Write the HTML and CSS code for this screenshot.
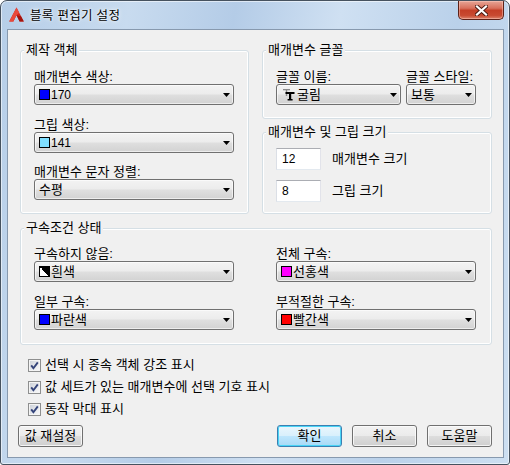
FILE: index.html
```html
<!DOCTYPE html>
<html lang="ko">
<head>
<meta charset="utf-8">
<title>블록 편집기 설정</title>
<link rel="stylesheet" href="styles.css">
</head>
<body>
<div class="window">
  <div class="titlebar">
    <svg class="app-icon" width="15" height="15" viewBox="0 0 15 15">
      <path d="M7.5 0.5 L14.8 14.5 H10.6 L7.5 8.2 L4.4 14.5 H0.2 Z" fill="#d3261c"/>
      <path d="M7.5 0.5 L10.2 5.8 L7.5 8.2 L4.4 14.5 H0.2 Z" fill="#e8493c"/>
      <path d="M7.5 8.2 L10.6 14.5 H14.8 L12 9.2 Z" fill="#a3140e"/>
    </svg>
    <span class="title">블록 편집기 설정</span>
    <div class="close">
      <svg width="13" height="11" viewBox="0 0 13 11">
        <path d="M2 1.5 L11 9.5 M11 1.5 L2 9.5" stroke="#4a1a12" stroke-width="4" stroke-linecap="square"/>
        <path d="M2 1.5 L11 9.5 M11 1.5 L2 9.5" stroke="#ffffff" stroke-width="2.2" stroke-linecap="square"/>
      </svg>
    </div>
  </div>
  <div class="client">
    <div class="top">
      <section class="group g-object">
        <div class="legend">제작 객체</div>
        <div class="field">
          <div class="lbl">매개변수 색상:</div>
          <div class="combo"><span class="sw sw-blue"></span><span class="val num">170</span><svg class="arrow" width="7" height="4" viewBox="0 0 7 4"><path d="M0 0H7L3.5 4Z"/></svg></div>
        </div>
        <div class="field">
          <div class="lbl">그립 색상:</div>
          <div class="combo"><span class="sw sw-cyan"></span><span class="val num">141</span><svg class="arrow" width="7" height="4" viewBox="0 0 7 4"><path d="M0 0H7L3.5 4Z"/></svg></div>
        </div>
        <div class="field field-last">
          <div class="lbl">매개변수 문자 정렬:</div>
          <div class="combo"><span class="val">수평</span><svg class="arrow" width="7" height="4" viewBox="0 0 7 4"><path d="M0 0H7L3.5 4Z"/></svg></div>
        </div>
      </section>
      <div class="rightcol">
        <section class="group g-font">
          <div class="legend">매개변수 글꼴</div>
          <div class="font-row">
            <div class="f-name">
              <div class="lbl">글꼴 이름:</div>
              <div class="combo combo-font">
                <svg class="tt" width="12" height="12" viewBox="0 0 12 12">
                  <rect x="0" y="0" width="7" height="1.3" fill="#8a8a8a"/>
                  <rect x="2.8" y="0" width="1.4" height="7" fill="#8a8a8a"/>
                  <rect x="2.5" y="3" width="9" height="2" fill="#000"/>
                  <rect x="6" y="3" width="2.2" height="8" fill="#000"/>
                  <rect x="4.6" y="10" width="5" height="1.5" fill="#000"/>
                </svg>
                <span class="val">굴림</span><svg class="arrow" width="7" height="4" viewBox="0 0 7 4"><path d="M0 0H7L3.5 4Z"/></svg>
              </div>
            </div>
            <div class="f-style">
              <div class="lbl">글꼴 스타일:</div>
              <div class="combo"><span class="val">보통</span><svg class="arrow" width="7" height="4" viewBox="0 0 7 4"><path d="M0 0H7L3.5 4Z"/></svg></div>
            </div>
          </div>
        </section>
        <section class="group g-size">
          <div class="legend">매개변수 및 그립 크기</div>
          <div class="size-row first">
            <div class="input num">12</div>
            <span>매개변수 크기</span>
          </div>
          <div class="size-row">
            <div class="input num">8</div>
            <span>그립 크기</span>
          </div>
        </section>
      </div>
    </div>

    <section class="group g-cons">
      <div class="legend">구속조건 상태</div>
      <div class="cons-grid">
        <div class="field">
          <div class="lbl">구속하지 않음:</div>
          <div class="combo"><span class="sw sw-white"></span><span class="val">흰색</span><svg class="arrow" width="7" height="4" viewBox="0 0 7 4"><path d="M0 0H7L3.5 4Z"/></svg></div>
        </div>
        <div class="field">
          <div class="lbl">전체 구속:</div>
          <div class="combo"><span class="sw sw-magenta"></span><span class="val">선홍색</span><svg class="arrow" width="7" height="4" viewBox="0 0 7 4"><path d="M0 0H7L3.5 4Z"/></svg></div>
        </div>
        <div class="field">
          <div class="lbl">일부 구속:</div>
          <div class="combo"><span class="sw sw-blue"></span><span class="val">파란색</span><svg class="arrow" width="7" height="4" viewBox="0 0 7 4"><path d="M0 0H7L3.5 4Z"/></svg></div>
        </div>
        <div class="field">
          <div class="lbl">부적절한 구속:</div>
          <div class="combo"><span class="sw sw-red"></span><span class="val">빨간색</span><svg class="arrow" width="7" height="4" viewBox="0 0 7 4"><path d="M0 0H7L3.5 4Z"/></svg></div>
        </div>
      </div>
    </section>

    <div class="checks">
      <div class="check"><span class="box"><svg width="11" height="11" viewBox="0 0 11 11"><path d="M2.2 5.4 L4.4 8.2 L8.8 2.4" fill="none" stroke="#34447a" stroke-width="1.9"/></svg></span><span>선택 시 종속 객체 강조 표시</span></div>
      <div class="check"><span class="box"><svg width="11" height="11" viewBox="0 0 11 11"><path d="M2.2 5.4 L4.4 8.2 L8.8 2.4" fill="none" stroke="#34447a" stroke-width="1.9"/></svg></span><span>값 세트가 있는 매개변수에 선택 기호 표시</span></div>
      <div class="check"><span class="box"><svg width="11" height="11" viewBox="0 0 11 11"><path d="M2.2 5.4 L4.4 8.2 L8.8 2.4" fill="none" stroke="#34447a" stroke-width="1.9"/></svg></span><span>동작 막대 표시</span></div>
    </div>

    <div class="buttons">
      <div class="btn reset">값 재설정</div>
      <div class="btn default">확인</div>
      <div class="btn">취소</div>
      <div class="btn">도움말</div>
    </div>
  </div>
</div>
</body>
</html>
```

FILE: styles.css
```css
* { box-sizing: border-box; }
html, body { margin: 0; padding: 0; background: #ffffff; }
body {
  font-family: "Liberation Sans", "Noto Sans CJK KR", sans-serif;
  font-size: 13px;
  line-height: 14px;
  color: #000;
}
.num { font-size: 12px; }

.window {
  width: 510px;
  height: 465px;
  border: 1px solid #46525f;
  border-radius: 7px 7px 3px 3px;
  padding: 0 5px 6px 6px;
  display: flex;
  flex-direction: column;
  background: linear-gradient(100deg, #b6cee8 0%, #c8dbef 22%, #b4cce7 40%, #cfe0f2 58%, #bad1ea 78%, #cddff1 100%);
  box-shadow: inset 0 0 0 1px rgba(255, 255, 255, 0.55);
  overflow: hidden;
}

.titlebar {
  height: 28px;
  display: flex;
  align-items: flex-start;
  flex: none;
}
.app-icon { margin: 6px 0 0 2px; flex: none; }
.title {
  margin: 7px 0 0 6px;
  font-family: "Noto Sans CJK KR", sans-serif;
  font-size: 12.5px;
  letter-spacing: 0.3px;
  line-height: 14px;
  text-shadow: 0 0 5px rgba(255, 255, 255, 0.9), 0 0 2px rgba(255, 255, 255, 0.9);
}
.close {
  margin-left: auto;
  width: 46px;
  height: 19px;
  border: 1px solid #5c2118;
  border-top: none;
  border-radius: 0 0 5px 5px;
  background: linear-gradient(#e7a596 0%, #d8705c 40%, #c43f27 52%, #c84a31 80%, #dc826b 100%);
  box-shadow: inset 0 0 0 1px rgba(255, 210, 200, 0.45);
  display: flex;
  align-items: center;
  justify-content: center;
}

.client {
  flex: 1;
  border: 1px solid #8799ae;
  background: #f0f0f0;
  padding: 20px 11px 0 12px;
}

.top { display: flex; gap: 13px; }

.group {
  border: 1px solid #d5dfe5;
  border-radius: 3px;
  box-shadow: inset 0 0 0 1px #ffffff;
}
.legend {
  width: max-content;
  height: 14px;
  margin: -8px 0 0 -10px;
  padding: 0 2px;
  background: #f0f0f0;
  white-space: nowrap;
}

.lbl { height: 14px; white-space: nowrap; }

.combo {
  height: 21px;
  border: 1px solid #707070;
  border-radius: 3px;
  background: linear-gradient(#f3f3f3 0%, #ececec 48%, #dfdfdf 52%, #d2d2d2 100%);
  box-shadow: inset 0 0 0 1px rgba(255, 255, 255, 0.6);
  display: flex;
  align-items: center;
  padding: 0 3px 0 4px;
  white-space: nowrap;
}
.combo .val { line-height: 14px; }
.arrow { margin-left: auto; flex: none; fill: #000; }

.sw {
  width: 11px;
  height: 11px;
  border: 1px solid #000;
  margin-right: 1px;
  flex: none;
}
.sw-blue { background: #0000ff; }
.sw-cyan { background: #80dfff; }
.sw-magenta { background: #ff00ff; }
.sw-red { background: #ff0000; }
.sw-white { background: linear-gradient(to bottom left, #000 50%, #fff 50%); }

.g-object { width: 229px; padding: 0 14px 13px 13px; }
.g-object .field { margin-top: 13px; }
.g-object .field-last { margin-top: 12px; }

.rightcol { width: 230px; display: flex; flex-direction: column; gap: 13px; }

.g-font { padding: 0 13px 13px 13px; }
.font-row { display: flex; gap: 5px; margin-top: 13px; }
.f-name .combo { width: 125px; }
.f-style .combo { width: 70px; }
.combo-font { padding-left: 6px; }
.tt { flex: none; margin-right: 2px; }

.g-size { padding: 0 13px 11px 13px; }
.size-row { display: flex; align-items: center; gap: 11px; margin-top: 10px; }
.size-row.first { margin-top: 9px; }
.input {
  width: 45px;
  height: 22px;
  border: 1px solid;
  border-color: #abadb3 #e2e3ea #e3e9ef #dbdfe6;
  background: #fff;
  padding-left: 5px;
  display: flex;
  align-items: center;
}

.g-cons { margin-top: 14px; padding: 0 15px 14px 13px; }
.cons-grid {
  display: grid;
  grid-template-columns: 200px 200px;
  column-gap: 42px;
  row-gap: 13px;
  margin-top: 12px;
}

.checks { margin: 9px 0 0 8px; }
.check { height: 22px; display: flex; align-items: center; gap: 4px; white-space: nowrap; }
.box {
  width: 13px;
  height: 13px;
  border: 1px solid #8e8f8f;
  background: linear-gradient(135deg, #c9ced6 0%, #e6e8ec 55%, #fbfbfb 100%);
  box-shadow: inset 0 0 0 1px #f4f4f4;
  display: flex;
  align-items: center;
  justify-content: center;
  flex: none;
}

.buttons { display: flex; gap: 10px; margin: 5px 0 0 -2px; }
.btn {
  width: 65px;
  height: 22px;
  border: 1px solid #707070;
  border-radius: 3px;
  background: linear-gradient(#f2f2f2 0%, #ebebeb 48%, #dddddd 52%, #cfcfcf 100%);
  box-shadow: inset 0 0 0 1px rgba(252, 252, 252, 0.8);
  display: flex;
  align-items: center;
  justify-content: center;
  white-space: nowrap;
}
.btn.reset { margin-right: auto; }
.btn.default {
  border-color: #3c7fb1;
  background: linear-gradient(#eaf6fd 0%, #d9f0fc 48%, #bee6fd 52%, #a7d9f5 100%);
  box-shadow: inset 0 0 0 1px #48d4f6;
}
```
